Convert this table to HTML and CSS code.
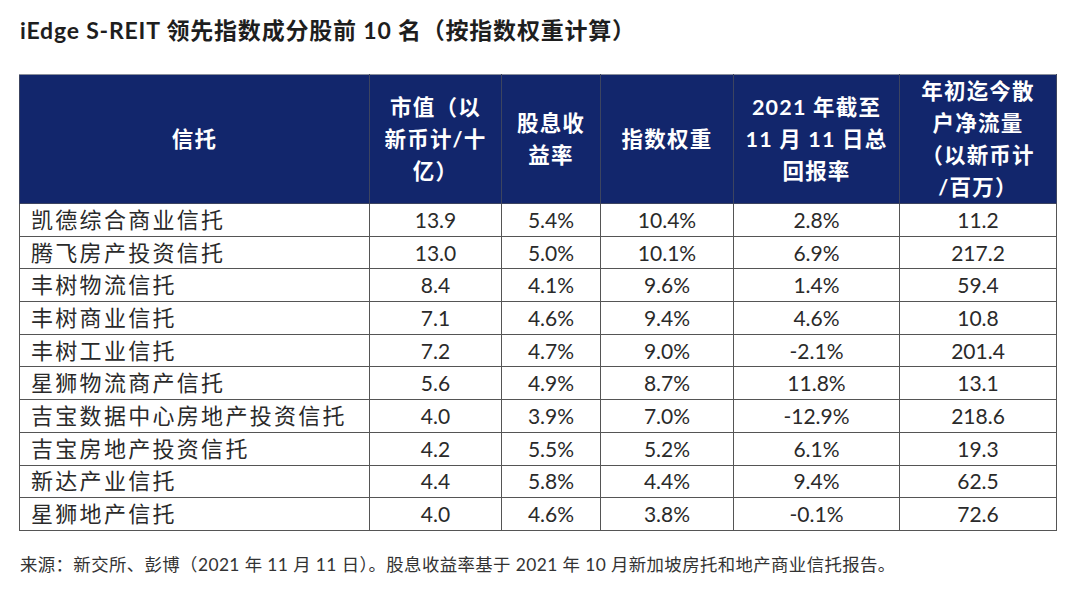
FILE: index.html
```html
<!DOCTYPE html>
<html lang="zh-CN">
<head>
<meta charset="utf-8">
<title>iEdge S-REIT</title>
<link rel="stylesheet" href="styles.css">
</head>
<body>
<div class="page">
  <h1 class="title">iEdge S-REIT 领先指数成分股前 10 名（按指数权重计算）</h1>
  <table class="reit">
    <colgroup>
      <col class="c1"><col class="c2"><col class="c3"><col class="c4"><col class="c5"><col class="c6">
    </colgroup>
    <thead>
      <tr>
        <th>信托</th>
        <th>市值（以<br>新币计/十<br>亿）</th>
        <th>股息收<br>益率</th>
        <th>指数权重</th>
        <th>2021 年截至<br>11 月 11 日总<br>回报率</th>
        <th>年初迄今散<br>户净流量<br>（以新币计<br>/百万）</th>
      </tr>
    </thead>
    <tbody>
      <tr><td class="name">凯德综合商业信托</td><td>13.9</td><td>5.4%</td><td>10.4%</td><td>2.8%</td><td>11.2</td></tr>
      <tr><td class="name">腾飞房产投资信托</td><td>13.0</td><td>5.0%</td><td>10.1%</td><td>6.9%</td><td>217.2</td></tr>
      <tr><td class="name">丰树物流信托</td><td>8.4</td><td>4.1%</td><td>9.6%</td><td>1.4%</td><td>59.4</td></tr>
      <tr><td class="name">丰树商业信托</td><td>7.1</td><td>4.6%</td><td>9.4%</td><td>4.6%</td><td>10.8</td></tr>
      <tr><td class="name">丰树工业信托</td><td>7.2</td><td>4.7%</td><td>9.0%</td><td>-2.1%</td><td>201.4</td></tr>
      <tr><td class="name">星狮物流商产信托</td><td>5.6</td><td>4.9%</td><td>8.7%</td><td>11.8%</td><td>13.1</td></tr>
      <tr><td class="name">吉宝数据中心房地产投资信托</td><td>4.0</td><td>3.9%</td><td>7.0%</td><td>-12.9%</td><td>218.6</td></tr>
      <tr><td class="name">吉宝房地产投资信托</td><td>4.2</td><td>5.5%</td><td>5.2%</td><td>6.1%</td><td>19.3</td></tr>
      <tr><td class="name">新达产业信托</td><td>4.4</td><td>5.8%</td><td>4.4%</td><td>9.4%</td><td>62.5</td></tr>
      <tr><td class="name">星狮地产信托</td><td>4.0</td><td>4.6%</td><td>3.8%</td><td>-0.1%</td><td>72.6</td></tr>
    </tbody>
  </table>
  <p class="source">来源：新交所、彭博（2021 年 11 月 11 日）。股息收益率基于 2021 年 10 月新加坡房托和地产商业信托报告。</p>
</div>
</body>
</html>
```
FILE: styles.css
```css
html, body {
  margin: 0;
  padding: 0;
  background: #ffffff;
}
body {
  font-family: Lato, "Noto Sans CJK SC", sans-serif;
  color: #222222;
}
.page {
  width: 1080px;
  height: 589px;
  overflow: hidden;
  padding: 0 0 0 19px;
  box-sizing: border-box;
}
.title {
  margin: 0;
  padding: 15px 0 0 1px;
  height: 74px;
  box-sizing: border-box;
  font-size: 23px;
  line-height: 30px;
  font-weight: 700;
  color: #1e1e1e;
  letter-spacing: 0.8px;
}
.reit {
  border-collapse: collapse;
  width: 1037px;
  table-layout: fixed;
  border: 1.5px solid #4a4a4a;
}
.c1 { width: 350px; }
.c2 { width: 132px; }
.c3 { width: 99px; }
.c4 { width: 133px; }
.c5 { width: 166px; }
.c6 { width: 157px; }
.reit th {
  background: #12266c;
  color: #ffffff;
  font-weight: 700;
  font-size: 21.5px;
  line-height: 32px;
  letter-spacing: 1.2px;
  height: 128px;
  padding: 0;
  text-align: center;
  vertical-align: middle;
  border: 1px solid #3c4460;
  border-top-color: #8a8f9c;
}
.reit td {
  height: 31.7px;
  padding: 0;
  text-align: center;
  vertical-align: middle;
  font-size: 21px;
  line-height: 30px;
  color: #2a2a2a;
  border: 1px solid #555555;
}
.reit td.name {
  text-align: left;
  padding-left: 11px;
  font-size: 22px;
  letter-spacing: 2.3px;
}
.source {
  margin: 22px 0 0 1px;
  font-size: 17.4px;
  line-height: 24px;
  color: #333333;
  letter-spacing: 0.4px;
}
```
